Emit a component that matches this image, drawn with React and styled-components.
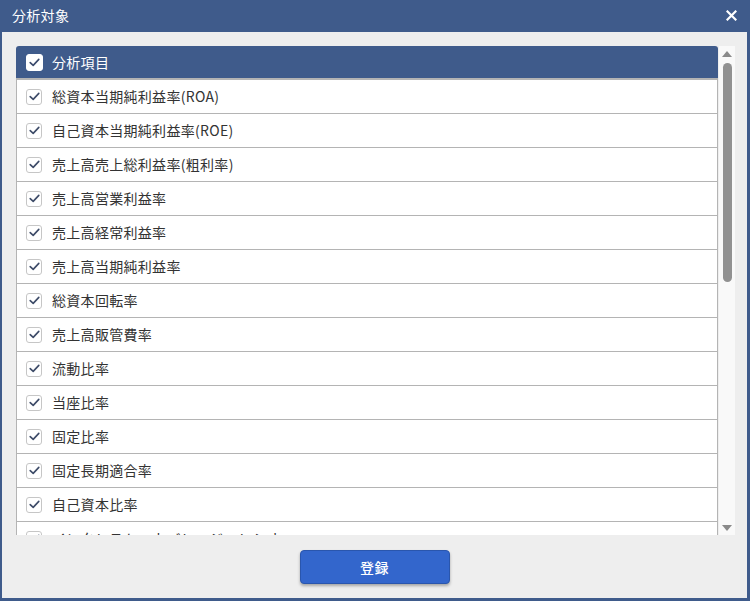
import React from "react";
import styled, { createGlobalStyle } from "styled-components";

const BLUE = "#3f5b8b";

const Global = createGlobalStyle`
  html, body { margin: 0; padding: 0; background: #ffffff; }
  body { font-family: "Noto Sans CJK JP", "Noto Sans", sans-serif; }
`;

const Dialog = styled.div`
  width: 750px;
  height: 601px;
  box-sizing: border-box;
  border-left: 2px solid ${BLUE};
  border-right: 3px solid ${BLUE};
  border-bottom: 3px solid ${BLUE};
  background: #eeeeee;
  display: flex;
  flex-direction: column;
`;

const TitleBar = styled.div`
  height: 32px;
  flex: 0 0 32px;
  background: ${BLUE};
  color: #fff;
  display: flex;
  align-items: center;
  justify-content: space-between;
  padding: 0 10px 0 10px;
  font-size: 14px;
  letter-spacing: 0.3px;
`;

const Title = styled.span`
  line-height: 1;
  margin-top: -2px;
`;

const Close = styled.svg`
  width: 11px;
  height: 11px;
  margin-top: -2px;
`;

const Body = styled.div`
  padding: 14px 12px 0 14px;
`;

const ListWrap = styled.div`
  height: 489px;
  display: flex;
`;

const Viewport = styled.div`
  flex: 1;
  overflow: hidden;
  display: flex;
  flex-direction: column;
`;

const HeaderRow = styled.div`
  height: 32px;
  flex: 0 0 32px;
  background: ${BLUE};
  border-radius: 3px 3px 0 0;
  border-bottom: 2px solid #b4b4b4;
  display: flex;
  align-items: center;
  padding-left: 10px;
  gap: 9px;
  color: #fff;
  font-size: 14px;
  letter-spacing: 0.3px;
`;

const Row = styled.div`
  height: 33px;
  flex: 0 0 33px;
  background: #fff;
  border-left: 1px solid #b4b4b4;
  border-right: 1px solid #b4b4b4;
  border-bottom: 1px solid #b4b4b4;
  display: flex;
  align-items: center;
  padding-left: 9px;
  gap: 10px;
  color: #333;
  font-size: 14px;
  letter-spacing: 0.3px;
  white-space: nowrap;
`;

const Box = styled.span`
  box-sizing: border-box;
  width: ${(p) => (p.$header ? 17 : 16)}px;
  height: ${(p) => (p.$header ? 17 : 16)}px;
  flex: 0 0 auto;
  border: 1px solid ${(p) => (p.$header ? "#ffffff" : "#c6c6c6")};
  border-radius: 3px;
  background: #fff;
  display: flex;
  align-items: center;
  justify-content: center;
`;

const Label = styled.span`
  line-height: 1;
  margin-top: -1px;
`;

const ScrollTrack = styled.div`
  width: 16px;
  flex: 0 0 16px;
  margin-left: 1px;
  background: #f9f9f9;
  display: flex;
  flex-direction: column;
  align-items: center;
`;

const Arrow = styled.div`
  width: 0;
  height: 0;
  border-left: 5px solid transparent;
  border-right: 5px solid transparent;
  ${(p) =>
    p.$down
      ? `border-top: 6px solid #8a8a8a; margin-top: auto; margin-bottom: 4px;`
      : `border-bottom: 6px solid #8a8a8a; margin-top: 5px;`}
`;

const Thumb = styled.div`
  width: 9px;
  height: 219px;
  margin-top: 6px;
  border-radius: 5px;
  background: #919191;
`;

const Footer = styled.div`
  flex: 1;
  display: flex;
  justify-content: center;
  padding-top: 15px;
`;

const Button = styled.button`
  width: 150px;
  height: 34px;
  box-sizing: border-box;
  background: #3366cc;
  border: 1px solid #2a56ad;
  border-radius: 4px;
  box-shadow: 0 2px 3px rgba(0, 0, 0, 0.3);
  color: #fff;
  font-family: "Noto Sans CJK JP", sans-serif;
  font-size: 14px;
  font-weight: 500;
  letter-spacing: 0.5px;
  cursor: pointer;
`;

const Check = ({ header }) => (
  <Box $header={header}>
    <svg width="11" height="9" viewBox="0 0 11 9">
      <path
        d="M1.2 4.6 L4.2 7.4 L9.8 1.4"
        fill="none"
        stroke={header ? "#3a4a6c" : "#3d4b68"}
        strokeWidth="1.6"
        strokeLinecap="round"
        strokeLinejoin="round"
      />
    </svg>
  </Box>
);

const items = [
  "総資本当期純利益率(ROA)",
  "自己資本当期純利益率(ROE)",
  "売上高売上総利益率(粗利率)",
  "売上高営業利益率",
  "売上高経常利益率",
  "売上高当期純利益率",
  "総資本回転率",
  "売上高販管費率",
  "流動比率",
  "当座比率",
  "固定比率",
  "固定長期適合率",
  "自己資本比率",
  "インタレスト・カバレッジ・レシオ",
  "債務償還年数",
];

export default function App() {
  return (
    <>
      <Global />
      <Dialog>
        <TitleBar>
          <Title>分析対象</Title>
          <Close viewBox="0 0 11 11">
            <path d="M1.5 1.5 L9.5 9.5 M9.5 1.5 L1.5 9.5" stroke="#fff" strokeWidth="2.2" strokeLinecap="square" />
          </Close>
        </TitleBar>
        <Body>
          <ListWrap>
            <Viewport>
              <HeaderRow>
                <Check header />
                <Label>分析項目</Label>
              </HeaderRow>
              {items.map((t) => (
                <Row key={t}>
                  <Check />
                  <Label>{t}</Label>
                </Row>
              ))}
            </Viewport>
            <ScrollTrack>
              <Arrow />
              <Thumb />
              <Arrow $down />
            </ScrollTrack>
          </ListWrap>
        </Body>
        <Footer>
          <Button>登録</Button>
        </Footer>
      </Dialog>
    </>
  );
}
